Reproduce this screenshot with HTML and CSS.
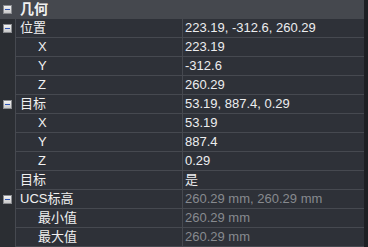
FILE: index.html
```html
<!DOCTYPE html>
<html lang="zh">
<head>
    <meta charset="UTF-8">
    <title>特性</title>
    <link rel="stylesheet" href="styles.css">
</head>
<body>
    <div class="grid">
        <div class="row head">
            <span class="gut"><i class="tog"></i></span>
            <span class="name">几何</span>
        </div>
        <div class="row">
            <span class="gut"><i class="tog"></i></span>
            <span class="name">位置</span>
            <span class="val">223.19, -312.6, 260.29</span>
        </div>
        <div class="row">
            <span class="gut"></span>
            <span class="name sub">X</span>
            <span class="val">223.19</span>
        </div>
        <div class="row">
            <span class="gut"></span>
            <span class="name sub">Y</span>
            <span class="val">-312.6</span>
        </div>
        <div class="row">
            <span class="gut"></span>
            <span class="name sub">Z</span>
            <span class="val">260.29</span>
        </div>
        <div class="row">
            <span class="gut"><i class="tog"></i></span>
            <span class="name">目标</span>
            <span class="val">53.19, 887.4, 0.29</span>
        </div>
        <div class="row">
            <span class="gut"></span>
            <span class="name sub">X</span>
            <span class="val">53.19</span>
        </div>
        <div class="row">
            <span class="gut"></span>
            <span class="name sub">Y</span>
            <span class="val">887.4</span>
        </div>
        <div class="row">
            <span class="gut"></span>
            <span class="name sub">Z</span>
            <span class="val">0.29</span>
        </div>
        <div class="row">
            <span class="gut"></span>
            <span class="name">目标</span>
            <span class="val">是</span>
        </div>
        <div class="row">
            <span class="gut"><i class="tog"></i></span>
            <span class="name">UCS标高</span>
            <span class="val off">260.29 mm, 260.29 mm</span>
        </div>
        <div class="row">
            <span class="gut"></span>
            <span class="name sub">最小值</span>
            <span class="val off">260.29 mm</span>
        </div>
        <div class="row">
            <span class="gut"></span>
            <span class="name sub">最大值</span>
            <span class="val off">260.29 mm</span>
        </div>
    </div>
</body>
</html>
```

FILE: styles.css
```css
body { margin: 0; background: #1e2024; font-family: "Liberation Sans", "Noto Sans CJK SC", sans-serif; font-size: 13px; color: #f0f0f0; }
.grid { width: 364px; height: 247px; background: #2e3138; overflow: hidden; }
.row { display: flex; height: 18px; border-bottom: 1px solid #464950; }
.gut { width: 15px; flex: none; display: flex; align-items: center; justify-content: center; background: #2b2e33; border-right: 1px solid #464950; margin-bottom: -1px; }
.tog { display: block; width: 7px; height: 7px; border: 1px solid #8a8c90; background: linear-gradient(#f4f4f4, #c8c8c8); position: relative; }
.tog::after { content: ""; position: absolute; left: 1px; right: 1px; top: 3px; height: 1px; background: #2e56b8; }
.name { width: 162px; flex: none; padding-left: 4px; line-height: 18px; border-right: 1px solid #464950; white-space: nowrap; }
.sub { padding-left: 22px; width: 144px; }
.val { flex: 1; padding-left: 2px; line-height: 18px; white-space: nowrap; color: #ecedef; }
.off { color: #878a8f; }
.head { background: #45484e; border-bottom-color: #45484e; }
.head .gut { background: #45484e; border-right-color: #45484e; }
.head .name { font-weight: bold; font-size: 14px; border-right: none; }
```
